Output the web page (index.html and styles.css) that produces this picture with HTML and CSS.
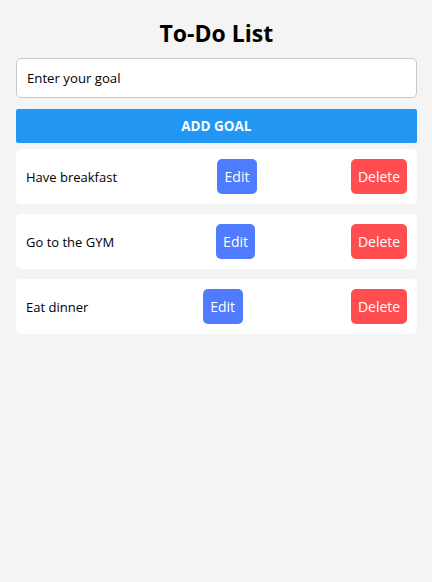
FILE: index.html
```html
<!DOCTYPE html>
<html lang="en">
<head>
<meta charset="utf-8">
<title>To-Do List</title>
<link rel="stylesheet" href="styles.css">
</head>
<body>
<main class="app">
  <h1 class="title">To-Do List</h1>
  <input class="goal-input" type="text" placeholder="Enter your goal">
  <button class="add-btn">ADD GOAL</button>
  <ul class="list">
    <li class="item">
      <span class="item-text">Have breakfast</span>
      <button class="btn btn-edit">Edit</button>
      <button class="btn btn-delete">Delete</button>
    </li>
    <li class="item">
      <span class="item-text">Go to the GYM</span>
      <button class="btn btn-edit">Edit</button>
      <button class="btn btn-delete">Delete</button>
    </li>
    <li class="item">
      <span class="item-text">Eat dinner</span>
      <button class="btn btn-edit">Edit</button>
      <button class="btn btn-delete">Delete</button>
    </li>
  </ul>
</main>
</body>
</html>
```
FILE: styles.css
```css
* { box-sizing: border-box; }
body {
  margin: 0;
  background: #f4f4f4;
  font-family: "Open Sans", "Noto Sans", sans-serif;
  color: #000;
}
.app {
  padding: 17px 15.3px 17px 16px;
  display: flex;
  flex-direction: column;
}
.title {
  margin: 0 0 9px;
  font-size: 23px;
  line-height: 32px;
  font-weight: 700;
  text-align: center;
}
.goal-input {
  height: 40px;
  border: 1px solid #c8c8c8;
  border-radius: 5px;
  padding: 0 10px;
  font: inherit;
  font-size: 13.2px;
  background: #fff;
  outline: none;
}
.goal-input::placeholder { color: #000; }
.add-btn {
  margin-top: 11px;
  height: 34px;
  border: 0;
  border-radius: 2px;
  background: #2196f3;
  color: #fff;
  font: inherit;
  font-size: 13.5px;
  font-weight: 700;
}
.list {
  list-style: none;
  margin: 6px 0 0;
  padding: 0;
  display: flex;
  flex-direction: column;
  gap: 10px;
}
.item {
  background: #fff;
  border-radius: 5px;
  padding: 10px;
  display: flex;
  align-items: center;
  justify-content: space-between;
}
.item-text {
  font-size: 13px;
  margin-right: 5.5px;
}
.btn {
  height: 35px;
  border: 0;
  border-radius: 5px;
  color: #fff;
  font: inherit;
  font-size: 14px;
}
.btn-edit {
  padding: 0 7.5px;
  background: #4f7bff;
}
.btn-delete {
  padding: 0 6.5px;
  background: #ff4d50;
}
```
